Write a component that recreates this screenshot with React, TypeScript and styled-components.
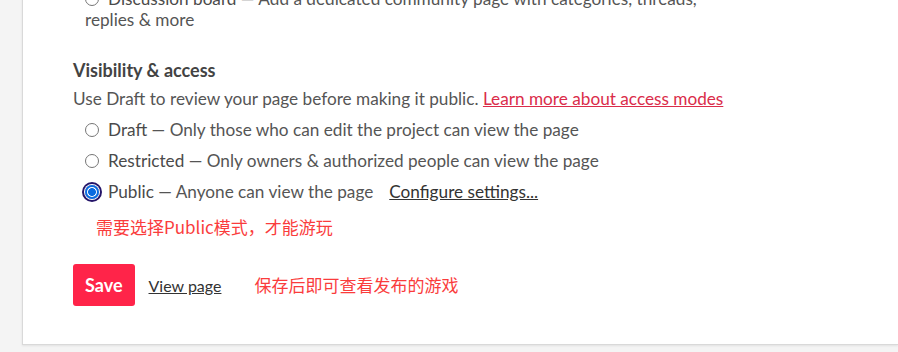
import React from "react";
import styled, { createGlobalStyle } from "styled-components";

const Global = createGlobalStyle`
  html, body { margin: 0; padding: 0; }
  body {
    background: #f4f4f4;
    font-family: Lato, "Noto Sans CJK SC", sans-serif;
    overflow: hidden;
    height: 352px;
  }
`;

const Page = styled.div`
  padding-left: 22px;
  margin-top: -18px;
`;

const Panel = styled.div`
  background: #fff;
  border: 1px solid #d9d9d9;
  border-right: none;
  box-shadow: 0 1px 2px rgba(0, 0, 0, 0.08);
  padding: 0 0 38px 50px;
`;

const Options = styled.div`
  display: flex;
  flex-direction: column;
  padding-left: 12px;
`;

const Option = styled.label<{ $wrap?: boolean }>`
  display: block;
  max-width: ${(p) => (p.$wrap ? "640px" : "none")};
  font-size: 17.2px;
  line-height: 21px;
  color: #555;
  padding: 5px 0;
`;

const Radio = styled.input.attrs({ type: "radio" })<{ $focus?: boolean }>`
  appearance: none;
  box-sizing: border-box;
  width: 14px;
  height: 14px;
  margin: 0 9px 0 0;
  vertical-align: -1px;
  border-radius: 50%;
  border: 1px solid #767676;
  background: #fff;
  &:checked {
    border: 2px solid #0a6be0;
    background: radial-gradient(circle, #0a6be0 0 3.6px, #fff 4.2px);
  }
  ${(p) =>
    p.$focus
      ? `box-shadow: 0 0 0 1px #fff, 0 0 0 3px #241468;`
      : ""}
`;

const Strong = styled.span`
  color: #4a4a4a;
`;

const Desc = styled.span`
  color: #555;
`;

const Heading = styled.h3`
  margin: 23px 0 0;
  font-size: 18px;
  font-weight: 700;
  color: #434343;
  line-height: 24px;
`;

const Para = styled.p`
  margin: 5.5px 0 5px;
  font-size: 17.2px;
  line-height: 21px;
  color: #555;
`;

const RedLink = styled.a`
  color: #da2c4a;
  text-decoration: underline;
`;

const PlainLink = styled.a<{ $gap?: number }>`
  color: #333;
  text-decoration: underline;
  margin-left: ${(p) => p.$gap ?? 0}px;
`;

const Note = styled.div<{ $indent?: number; $top?: number }>`
  color: #fa3c3c;
  font-family: "Noto Sans CJK SC", sans-serif;
  font-size: 17px;
  line-height: 24px;
  margin-left: ${(p) => p.$indent ?? 0}px;
  margin-top: ${(p) => p.$top ?? 0}px;
`;

const Actions = styled.div`
  display: flex;
  align-items: center;
  margin-top: 25px;
`;

const SaveButton = styled.button`
  background: #ff2449;
  color: #fff;
  border: none;
  border-radius: 3px;
  font-family: Lato, sans-serif;
  font-weight: 700;
  font-size: 18px;
  height: 42px;
  padding: 0 12px;
  cursor: pointer;
`;

const ViewLink = styled.a`
  color: #333;
  font-size: 16px;
  text-decoration: underline;
  margin-left: 14px;
  margin-right: 33px;
`;

export default function App() {
  return (
    <>
      <Global />
      <Page>
        <Panel>
          <Options>
            <Option $wrap>
              <Radio name="comm" />
              <Strong>Discussion board</Strong>
              <Desc> — Add a dedicated community page with categories, threads, replies &amp; more</Desc>
            </Option>
          </Options>
          <Heading>Visibility &amp; access</Heading>
          <Para>
            Use Draft to review your page before making it public.{" "}
            <RedLink href="#">Learn more about access modes</RedLink>
          </Para>
          <Options>
            <Option>
              <Radio name="vis" />
              <Strong>Draft</Strong>
              <Desc> — Only those who can edit the project can view the page</Desc>
            </Option>
            <Option>
              <Radio name="vis" />
              <Strong>Restricted</Strong>
              <Desc> — Only owners &amp; authorized people can view the page</Desc>
            </Option>
            <Option>
              <Radio name="vis" defaultChecked $focus />
              <Strong>Public</Strong>
              <Desc> — Anyone can view the page</Desc>
              <PlainLink href="#" $gap={16}>Configure settings...</PlainLink>
            </Option>
            <Note $indent={11} $top={8.5}>需要选择Public模式，才能游玩</Note>
          </Options>
          <Actions>
            <SaveButton>Save</SaveButton>
            <ViewLink href="#">View page</ViewLink>
            <Note>保存后即可查看发布的游戏</Note>
          </Actions>
        </Panel>
      </Page>
    </>
  );
}
